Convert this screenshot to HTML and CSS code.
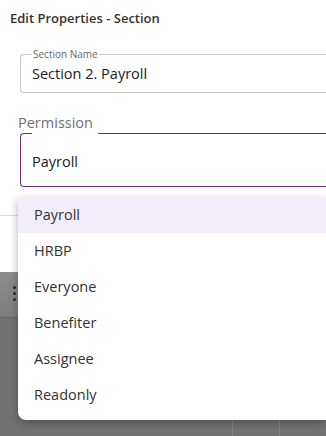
FILE: index.html
```html
<!DOCTYPE html>
<html lang="en">
<head>
  <meta charset="utf-8">
  <title>Edit Properties - Section</title>
  <link rel="stylesheet" href="styles.css">
</head>
<body>
  <div class="modal">
    <div class="modal-title">Edit Properties - Section</div>

    <fieldset class="field">
      <legend>Section Name</legend>
      <div class="field-value">Section 2. Payroll</div>
    </fieldset>

    <div class="perm-label">Permission</div>
    <fieldset class="field field-focus">
      <legend></legend>
      <div class="field-value">Payroll</div>
    </fieldset>

    <div class="divider"></div>
  </div>

  <div class="backdrop">
    <div class="card">
      <span class="kebab"><i></i><i></i><i></i></span>
    </div>
    <div class="cells">
      <div class="cell wide"></div>
      <div class="cell"></div>
      <div class="cell"></div>
    </div>
  </div>

  <ul class="menu">
    <li class="active">Payroll</li>
    <li>HRBP</li>
    <li>Everyone</li>
    <li>Benefiter</li>
    <li>Assignee</li>
    <li>Readonly</li>
  </ul>
</body>
</html>
```

FILE: styles.css
```css
body {
  margin: 0;
  width: 326px;
  height: 436px;
  overflow: hidden;
  position: relative;
  background: #727272;
  font-family: "Open Sans", "Noto Sans", sans-serif;
  color: #323130;
}

.modal {
  height: 272px;
  background: #fff;
  overflow: hidden;
}

.modal-title {
  padding: 9px 0 0 10px;
  font-size: 13px;
  font-weight: 600;
  line-height: 18px;
  color: #333;
}

/* fields run off the right edge, so no right border */
.field {
  margin: 21px 0 0 20px;
  padding: 4px 11px 8px;
  border: 1px solid #c8c8c8;
  border-right: 0;
  border-radius: 4px 0 0 4px;
  min-width: 0;
}

.field legend {
  padding: 0 1px;
  font-size: 10px;
  line-height: 12px;
  color: #666;
}

.field-value {
  font-size: 14.5px;
  line-height: 20px;
  color: #222;
}

.perm-label {
  margin: 19px 0 0 18px;
  font-size: 14.5px;
  line-height: 21px;
  color: #707070;
}

.field-focus {
  margin-top: 0;
  padding: 18px 11px 14px;
  border-color: #6b2d8f;
}

.field-focus legend {
  width: 66px;
  height: 0;
  padding: 0;
}

.divider {
  margin-top: 28px;
  height: 1px;
  background: #e0e0e0;
}

.backdrop {
  height: 164px;
  display: flex;
  flex-direction: column;
}

.card {
  height: 45px;
  border-bottom: 1px solid #666;
  background: linear-gradient(#8c8c8c, #7e7e7e);
  display: flex;
  align-items: center;
  padding-left: 13px;
}

.kebab {
  display: flex;
  flex-direction: column;
  gap: 3px;
  margin-top: -2px;
}

.kebab i {
  width: 3px;
  height: 3px;
  border-radius: 50%;
  background: #2e2e2e;
}

.cells {
  margin-top: auto;
  height: 18px;
  display: flex;
}

.cell {
  width: 48px;
  border-left: 1px solid #858585;
}

.cell.wide {
  width: 241px;
  border-left: 0;
}

.menu {
  position: absolute;
  top: 197px;
  left: 18px;
  right: 0;
  margin: 0;
  padding: 0 0 7px;
  list-style: none;
  background: #fff;
  border-radius: 2px 0 0 8px;
  box-shadow: 0 3px 10px rgba(0, 0, 0, 0.3);
}

.menu li {
  height: 36px;
  line-height: 36px;
  padding-left: 16px;
  font-size: 14.5px;
  color: #333;
}

.menu li.active {
  background: #f3edfa;
}
```
